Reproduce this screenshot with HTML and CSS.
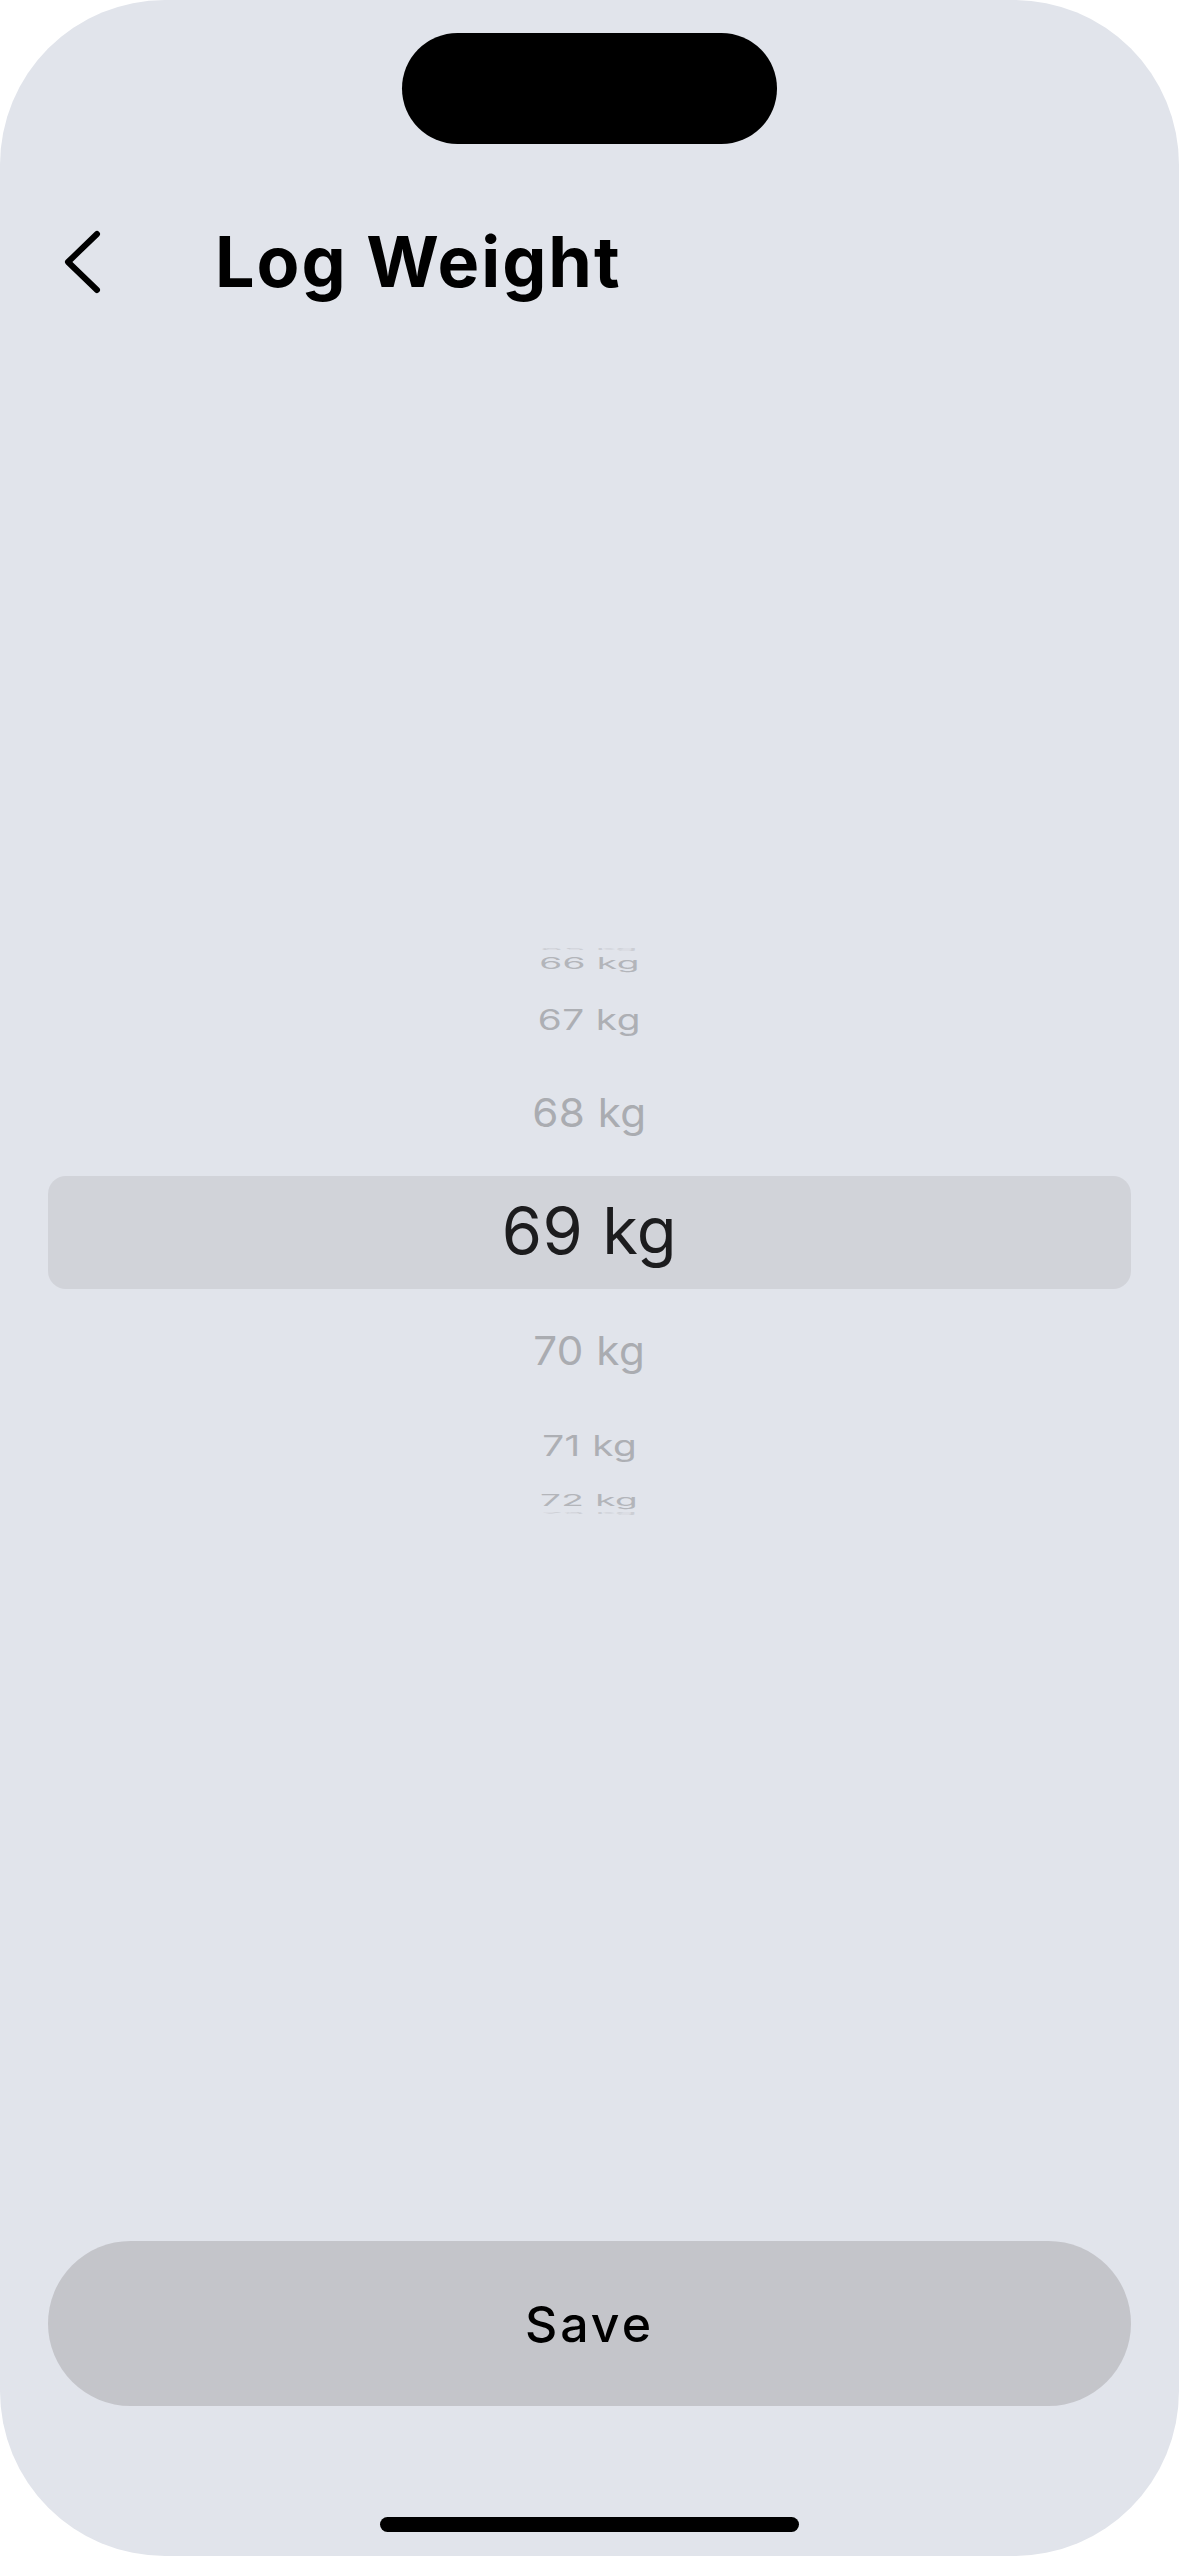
FILE: index.html
```html
<!DOCTYPE html>
<html lang="en">
<head>
<meta charset="utf-8">
<title>Log Weight</title>
<link rel="stylesheet" href="styles.css">
</head>
<body>
<div class="screen">
  <div class="island"></div>
  <header class="header">
    <svg class="back" width="40" height="64" viewBox="0 0 40 64" aria-label="Back">
      <path d="M33 4 L4 32 L33 60" fill="none" stroke="#000" stroke-width="6" stroke-linecap="round" stroke-linejoin="round"/>
    </svg>
    <h1 class="title">Log Weight</h1>
  </header>
  <main class="picker">
    <div class="band"></div>
    <div class="row r-m4">65 kg</div>
    <div class="row r-m3">66 kg</div>
    <div class="row r-m2">67 kg</div>
    <div class="row r-m1">68 kg</div>
    <div class="row selected">69 kg</div>
    <div class="row r-p1">70 kg</div>
    <div class="row r-p2">71 kg</div>
    <div class="row r-p3">72 kg</div>
    <div class="row r-p4">73 kg</div>
  </main>
  <button class="save">Save</button>
  <div class="home"></div>
</div>
</body>
</html>
```
FILE: styles.css
```css
* { box-sizing: border-box; }
html, body {
  margin: 0;
  padding: 0;
  background: #ffffff;
}
body {
  width: 1179px;
  height: 2556px;
  overflow: hidden;
  font-family: "Inter", "Noto Sans", sans-serif;
}
.screen {
  width: 1179px;
  height: 2556px;
  background: #e1e4eb;
  border-radius: 165px;
  display: flex;
  flex-direction: column;
  align-items: stretch;
  overflow: hidden;
}
.island {
  align-self: center;
  margin-top: 33px;
  width: 375px;
  height: 111px;
  border-radius: 56px;
  background: #000;
  flex: none;
}
.header {
  margin-top: 83px;
  height: 70px;
  display: flex;
  align-items: center;
  padding-left: 64px;
  gap: 111px;
  flex: none;
}
.back { display: block; flex: none; }
.title {
  margin: 0;
  font-family: "Inter", sans-serif;
  font-weight: 700;
  font-size: 70px;
  line-height: 1;
  letter-spacing: 2px;
  color: #000;
}
.picker {
  margin-top: 615px;
  height: 640px;
  display: grid;
  grid-template: 1fr / 1fr;
  align-items: center;
  justify-items: center;
  flex: none;
}
.picker > * { grid-area: 1 / 1; }
.band {
  justify-self: stretch;
  margin: 0 48px;
  height: 113px;
  border-radius: 18px;
  background: #d1d3d9;
}
.row {
  font-size: 43px;
  line-height: 1;
  color: #aaacb1;
  white-space: nowrap;
  letter-spacing: 0.5px;
}
.row.selected {
  font-size: 65px;
  color: #1c1c1e;
  letter-spacing: 0.5px;
  transform: translateY(-2px);
}
.r-m1 { transform: translateY(-120px) scale(0.98, 0.93); }
.r-m2 { transform: translateY(-213px) scale(0.9, 0.65); color: #adafb4; }
.r-m3 { transform: translateY(-269px) scale(0.86, 0.38); color: #b3b5ba; }
.r-m4 { transform: translateY(-283px) scale(0.84, 0.05); color: #ccced4; }
.r-p1 { transform: translateY(118px) scale(0.98, 0.93); }
.r-p2 { transform: translateY(213px) scale(0.9, 0.65); color: #adafb4; }
.r-p3 { transform: translateY(268px) scale(0.86, 0.36); color: #b3b5ba; }
.r-p4 { transform: translateY(281px) scale(0.84, 0.05); color: #ccced4; }
.save {
  margin: 689px 48px 0;
  height: 165px;
  border: none;
  border-radius: 83px;
  background: #c4c5ca;
  font-family: "Inter", sans-serif;
  font-weight: 500;
  font-size: 50px;
  line-height: 1;
  letter-spacing: 3px;
  color: #000;
  flex: none;
  padding: 0;
}
.home {
  align-self: center;
  margin-top: 111px;
  width: 419px;
  height: 15px;
  border-radius: 8px;
  background: #000;
  flex: none;
}
```
